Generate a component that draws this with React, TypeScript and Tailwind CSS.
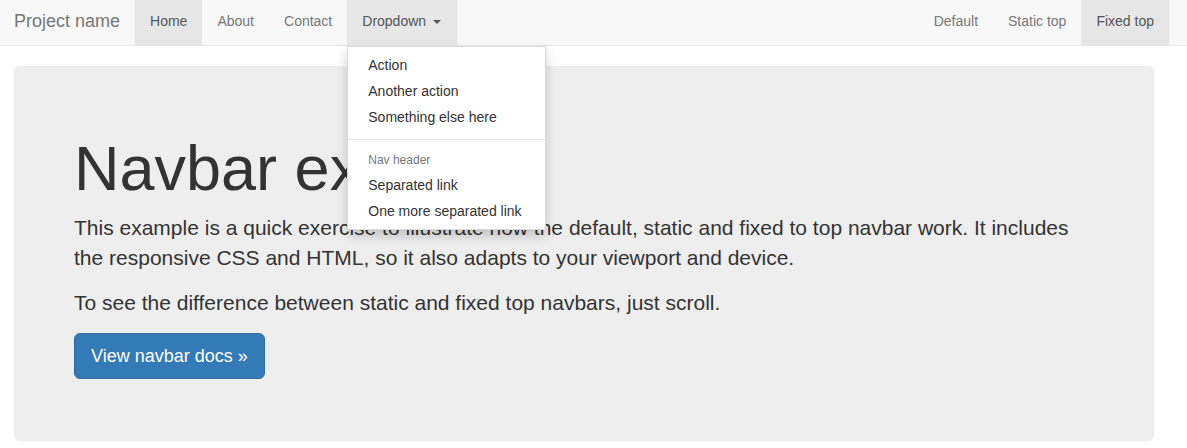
import React from "react";

export default function App() {
  const left = ["Home", "About", "Contact"];
  return (
    <div className="min-h-[448px] bg-white font-['Liberation_Sans',Arial,sans-serif] text-[14px] leading-[20px] text-[#333]">
      <nav className="relative z-10 flex h-[46px] justify-between border-b border-[#e7e7e7] bg-[#f8f8f8]">
        <div className="flex">
          <a className="block h-[45px] pl-[14px] pr-[15px] pt-[11px] text-[18px] leading-[20px] text-[#777]">Project name</a>
          <ul className="flex">
            {left.map((l, i) => (
              <li key={l}>
                <a
                  className={
                    i === 0
                      ? "block h-[45px] bg-[#e7e7e7] px-[15px] pt-[11px] text-[#555]"
                      : "block h-[45px] px-[15px] pt-[11px] text-[#777]"
                  }
                >
                  {l}
                </a>
              </li>
            ))}
            <li className="relative">
              <a className="flex h-[45px] items-start bg-[#e7e7e7] pl-[15px] pr-[16px] pt-[11px] text-[#555]">
                Dropdown
                <span className="ml-[7px] mt-[9px] h-0 w-0 border-x-[4px] border-t-[4px] border-x-transparent border-t-[#555]" />
              </a>
              <ul className="absolute left-0 top-[46px] w-[199px] rounded-b-[4px] border border-[rgba(0,0,0,0.15)] bg-white py-[5px] shadow-[0_6px_12px_rgba(0,0,0,0.175)]">
                <li><a className="block whitespace-nowrap px-[20px] py-[3px] text-[#333]">Action</a></li>
                <li><a className="block whitespace-nowrap px-[20px] py-[3px] text-[#333]">Another action</a></li>
                <li><a className="block whitespace-nowrap px-[20px] py-[3px] text-[#333]">Something else here</a></li>
                <li className="my-[9px] h-px bg-[#e5e5e5]" />
                <li className="whitespace-nowrap px-[20px] py-[3px] text-[12px] leading-[17px] text-[#777]">Nav header</li>
                <li><a className="block whitespace-nowrap px-[20px] py-[3px] text-[#333]">Separated link</a></li>
                <li><a className="block whitespace-nowrap px-[20px] py-[3px] text-[#333]">One more separated link</a></li>
              </ul>
            </li>
          </ul>
        </div>
        <ul className="flex pr-[18px]">
          <li><a className="block h-[45px] px-[15px] pt-[11px] text-[#777]">Default</a></li>
          <li><a className="block h-[45px] px-[15px] pt-[11px] text-[#777]">Static top</a></li>
          <li><a className="block h-[45px] bg-[#e7e7e7] px-[15px] pt-[11px] text-[#555]">Fixed top</a></li>
        </ul>
      </nav>
      <div className="pl-[14px] pt-[20px]">
        <div className="h-[375px] w-[1140px] rounded-[6px] bg-[#eeeeee] px-[60px] pt-[48px]">
          <h1 className="mb-[10px] mt-[20px] text-[63px] font-normal leading-[1.1] text-[#333]">Navbar example</h1>
          <p className="mb-[15px] text-[21px] leading-[30px]">
            This example is a quick exercise to illustrate how the default, static and fixed to top navbar work. It includes the responsive CSS and HTML, so it also adapts to your viewport and device.
          </p>
          <p className="mb-[15px] text-[21px] leading-[30px]">
            To see the difference between static and fixed top navbars, just scroll.
          </p>
          <div>
            <a className="inline-block rounded-[6px] border border-[#2e6da4] bg-[#337ab7] px-[16px] py-[10px] text-[18px] leading-[24px] text-white">
              View navbar docs »
            </a>
          </div>
        </div>
      </div>
    </div>
  );
}
